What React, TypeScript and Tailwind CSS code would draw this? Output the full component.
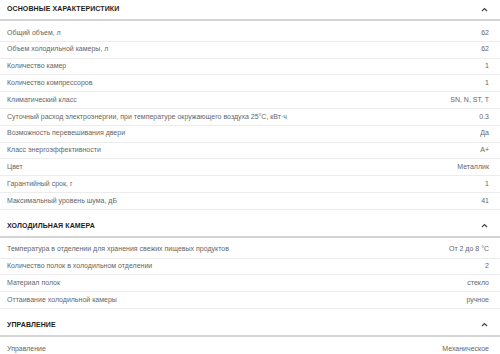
const sections: { title: string; rows: [string, string][] }[] = [
  {
    title: "Основные характеристики",
    rows: [
      ["Общий объем, л", "62"],
      ["Объем холодильной камеры, л", "62"],
      ["Количество камер", "1"],
      ["Количество компрессоров", "1"],
      ["Климатический класс", "SN, N, ST, T"],
      ["Суточный расход электроэнергии, при температуре окружающего воздуха 25°C, кВт·ч", "0.3"],
      ["Возможность перевешивания двери", "Да"],
      ["Класс энергоэффективности", "A+"],
      ["Цвет", "Металлик"],
      ["Гарантийный срок, г", "1"],
      ["Максимальный уровень шума, дБ", "41"],
    ],
  },
  {
    title: "Холодильная камера",
    rows: [
      ["Температура в отделении для хранения свежих пищевых продуктов", "От 2 до 8 °C"],
      ["Количество полок в холодильном отделении", "2"],
      ["Материал полок", "стекло"],
      ["Оттаивание холодильной камеры", "ручное"],
    ],
  },
  {
    title: "Управление",
    rows: [["Управление", "Механическое"]],
  },
];

function Chevron() {
  return (
    <svg width="7" height="5" viewBox="0 0 7 5" fill="none" stroke="#444" strokeWidth="1.2">
      <path d="M1 4 3.5 1.5 6 4" />
    </svg>
  );
}

export default function App() {
  return (
    <div className="h-[354px] w-[500px] overflow-hidden bg-white font-['Liberation_Sans',Arial,sans-serif]">
      {sections.map((s, i) => (
        <div key={s.title}>
          <div
            className={`flex items-center justify-between border-b-2 border-[#d4d4d4] pl-[7px] pr-[12px] ${
              i === 0 ? "pt-[4px] pb-[5px]" : "pt-[11px] pb-[5px]"
            }`}
          >
            <span className="text-[7px] leading-[10px] font-bold uppercase tracking-[0.1px] text-[#1d1d1d]">
              {s.title}
            </span>
            <Chevron />
          </div>
          <div className="mt-[4px]">
            {s.rows.map(([k, v]) => (
              <div
                key={k}
                className="flex h-[16.8px] items-center justify-between border-b border-[#ececec] pl-[7px] pr-[11px] text-[7px] text-[#666]"
              >
                <span>{k}</span>
                <span>{v}</span>
              </div>
            ))}
          </div>
        </div>
      ))}
    </div>
  );
}
